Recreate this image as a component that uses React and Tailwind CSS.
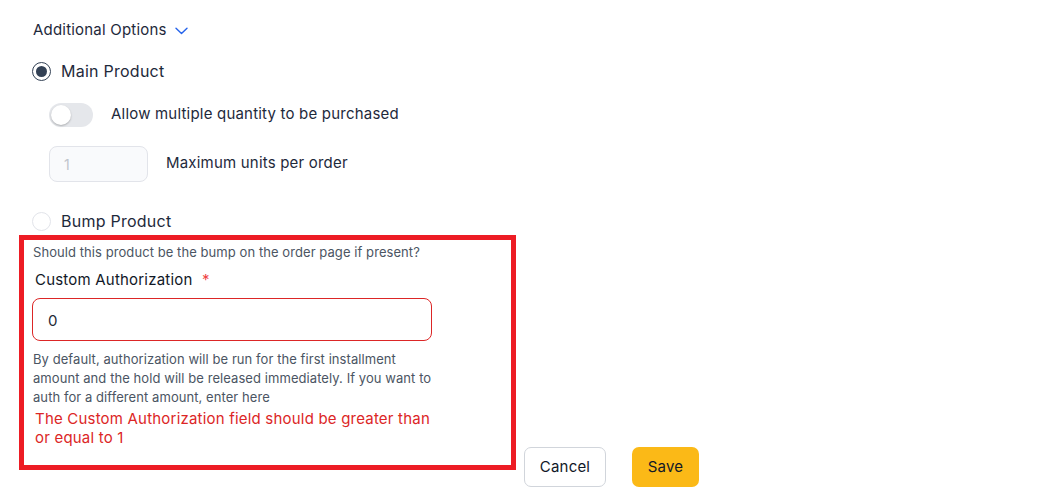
import React from "react";

export default function App() {
  return (
    <div className="relative w-[1039px] h-[498px] bg-white overflow-hidden" style={{ fontFamily: "Inter, 'Noto Sans', sans-serif" }}>
      <div className="flex flex-col pl-[32px] pt-[19px]">
        <div className="flex items-center h-[22px] text-[15px] tracking-[0.2px] text-[#1e293b]">
          <span className="pl-[1px]">Additional Options</span>
          <svg className="ml-[8px] mt-[1px]" width="13" height="8" viewBox="0 0 13 8" fill="none">
            <path d="M1 1.2 L6.5 6.5 L12 1.2" stroke="#2563eb" strokeWidth="1.4" strokeLinecap="round" strokeLinejoin="round" />
          </svg>
        </div>

        <div className="flex items-center h-[24px] mt-[18px]">
          <span className="w-[19px] h-[19px] rounded-full border-[1.5px] border-[#334155] flex items-center justify-center">
            <span className="w-[11px] h-[11px] rounded-full bg-[#334155]"></span>
          </span>
          <span className="ml-[10px] text-[16px] tracking-[0.25px] text-[#1e293b]">Main Product</span>
        </div>

        <div className="flex items-center h-[24px] mt-[20px] pl-[17px]">
          <span className="w-[44px] h-[24px] rounded-full bg-[#e5e7eb] flex items-center px-[2px]">
            <span className="w-[20px] h-[20px] rounded-full bg-white shadow-[0_1px_2px_rgba(0,0,0,0.25)]"></span>
          </span>
          <span className="ml-[18px] mt-[-2px] text-[15px] tracking-[0.2px] text-[#1e293b]">Allow multiple quantity to be purchased</span>
        </div>

        <div className="flex items-center mt-[19px] pl-[17px]">
          <div className="w-[99px] h-[36px] rounded-[8px] border border-[#e2e4ea] bg-[#f9fafc] flex items-center pl-[14px] text-[14px] text-[#c0c4cc]">1</div>
          <span className="ml-[18px] mt-[-2px] text-[15px] tracking-[0.2px] text-[#1e293b]">Maximum units per order</span>
        </div>

        <div className="flex items-center h-[24px] mt-[27px]">
          <span className="w-[19px] h-[19px] rounded-full border border-[#e2e4ea] bg-white"></span>
          <span className="ml-[10px] text-[16px] tracking-[0.25px] text-[#1e293b]">Bump Product</span>
        </div>

        <div className="mt-[10px] h-[18px] leading-[18px] text-[13px] tracking-[0.07px] text-[#4b5563] pl-[1px]">Should this product be the bump on the order page if present?</div>

        <div className="mt-[8px] h-[22px] leading-[22px] text-[15px] tracking-[0.2px] text-[#111827] pl-[3px]">
          Custom Authorization <span className="ml-[5px] text-[#ef4444]">*</span>
        </div>

        <div className="mt-[7px] w-[400px] h-[43px] rounded-[8px] border border-[#dc2626] flex items-center pl-[15px] pt-[4px] text-[15px] text-[#1f2937]">0</div>

        <div className="mt-[9px] w-[405px] text-[13px] leading-[19px] tracking-[0.07px] text-[#4b5563] pl-[1px]">
          By default, authorization will be run for the first installment amount and the hold will be released immediately. If you want to auth for a different amount, enter here
        </div>

        <div className="mt-[2px] w-[405px] text-[15px] leading-[19px] tracking-[0.2px] text-[#dc2626] pl-[3px]">
          The Custom Authorization field should be greater than or equal to 1
        </div>

        <div className="flex items-center gap-[26px] ml-[492px] mt-0">
          <button className="w-[82px] h-[40px] rounded-[7px] border border-[#d1d5db] bg-white text-[15px] tracking-[0.2px] text-[#111827]">Cancel</button>
          <button className="w-[67px] h-[40px] rounded-[7px] bg-[#fbb917] text-[15px] tracking-[0.2px] text-[#111827]">Save</button>
        </div>
      </div>

      <div className="absolute left-[19px] top-[235px] w-[497px] h-[235px] border-[5px] border-[#ed1c24] pointer-events-none"></div>
    </div>
  );
}
